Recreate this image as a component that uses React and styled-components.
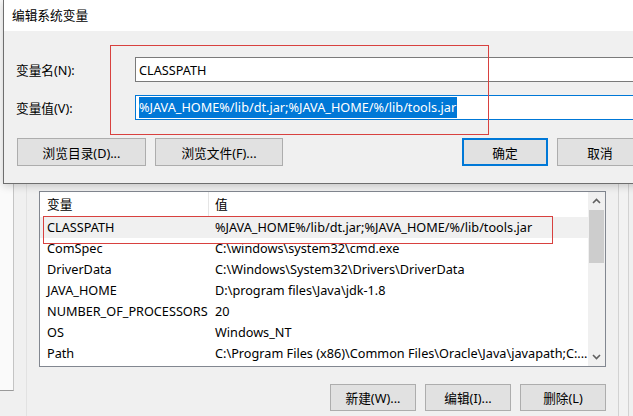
import React from "react";
import styled, { createGlobalStyle } from "styled-components";

const vars = [
  ["CLASSPATH", "%JAVA_HOME%/lib/dt.jar;%JAVA_HOME/%/lib/tools.jar"],
  ["ComSpec", "C:\\windows\\system32\\cmd.exe"],
  ["DriverData", "C:\\Windows\\System32\\Drivers\\DriverData"],
  ["JAVA_HOME", "D:\\program files\\Java\\jdk-1.8"],
  ["NUMBER_OF_PROCESSORS", "20"],
  ["OS", "Windows_NT"],
  ["Path", "C:\\Program Files (x86)\\Common Files\\Oracle\\Java\\javapath;C:..."],
];

function Chevron({ down }) {
  return (
    <svg width="9" height="6" viewBox="0 0 9 6">
      <polyline
        points={down ? "1,1 4.5,4.5 8,1" : "1,5 4.5,1.5 8,5"}
        fill="none"
        stroke="#606060"
        strokeWidth="1.6"
      />
    </svg>
  );
}

function App() {
  return (
    <>
      <GlobalStyle />
      <Desktop>
        <LeftStrip />
        <BackWindow>
          <ListBox>
            <Table>
              <HeaderRow>
                <NameCell $header>变量</NameCell>
                <ValueCell>值</ValueCell>
              </HeaderRow>
              {vars.map(([name, value], i) => (
                <Row key={name} $selected={i === 0}>
                  <NameCell>{name}</NameCell>
                  <ValueCell>{value}</ValueCell>
                </Row>
              ))}
            </Table>
            <Scrollbar>
              <ArrowBox>
                <Chevron />
              </ArrowBox>
              <Thumb />
              <Track />
              <ArrowBox>
                <Chevron down />
              </ArrowBox>
            </Scrollbar>
          </ListBox>
          <BottomButtons>
            <Button $w={86}>新建(W)...</Button>
            <Button $w={86}>编辑(I)...</Button>
            <Button $w={86}>删除(L)</Button>
          </BottomButtons>
        </BackWindow>
        <RightStrip />

        <Dialog>
          <TitleBar>编辑系统变量</TitleBar>
          <DialogBody>
            <Form>
              <Label>变量名(N):</Label>
              <Input>CLASSPATH</Input>
              <Label>变量值(V):</Label>
              <Input $focused>
                <Selected>%JAVA_HOME%/lib/dt.jar;%JAVA_HOME/%/lib/tools.jar</Selected>
              </Input>
            </Form>
            <DialogButtons>
              <Button $w={129} $ml={1}>浏览目录(D)...</Button>
              <Button $w={128}>浏览文件(F)...</Button>
              <Button $w={86} $ml={170} $default>确定</Button>
              <Button $w={86}>取消</Button>
            </DialogButtons>
          </DialogBody>
        </Dialog>

        <RedBox $left={110} $top={45} $w={379} $h={90} />
        <RedBox $left={43} $top={216} $w={510} $h={28} />
      </Desktop>
    </>
  );
}

const GlobalStyle = createGlobalStyle`
  html, body {
    margin: 0;
    padding: 0;
    background: #f0f0f0;
  }
  * {
    box-sizing: border-box;
  }
`;

const Desktop = styled.div`
  position: relative;
  width: 633px;
  height: 416px;
  overflow: hidden;
  display: flex;
  align-items: flex-start;
  background: #f0f0f0;
  font-family: "Noto Sans", "Noto Sans CJK SC", sans-serif;
  font-size: 12.7px;
  color: #000;
`;

const LeftStrip = styled.div`
  width: 14px;
  height: 391px;
  flex: none;
  background: #fafafa;
  border-right: 1px solid #c4c4c4;
  border-bottom: 1px solid #9a9a9a;
`;

const BackWindow = styled.div`
  width: 593px;
  height: 416px;
  flex: none;
  margin-left: 12px;
  padding: 191px 12px 0 12px;
  border-left: 1px solid #e2e2e2;
  border-right: 1px solid #d2d2d2;
  background: #f0f0f0;
`;

const RightStrip = styled.div`
  width: 10px;
  height: 416px;
  flex: none;
  border-right: 1px solid #d2d2d2;
  background: #f2f2f2;
`;

const ListBox = styled.div`
  width: 567px;
  height: 176px;
  display: flex;
  background: #fff;
  border: 1px solid #828790;
`;

const Table = styled.div`
  flex: 1;
  display: flex;
  flex-direction: column;
  overflow: hidden;
`;

const HeaderRow = styled.div`
  display: flex;
  height: 25px;
  line-height: 24px;
  padding-bottom: 1px;
`;

const Row = styled.div`
  display: flex;
  height: 21px;
  line-height: 21px;
  background: ${(p) => (p.$selected ? "#f0f0f0" : "transparent")};
`;

const NameCell = styled.div`
  width: 169px;
  flex: none;
  padding-left: 7px;
  white-space: nowrap;
  border-right: ${(p) => (p.$header ? "1px solid #e5e5e5" : "1px solid transparent")};
`;

const ValueCell = styled.div`
  flex: 1;
  padding-left: 6px;
  white-space: nowrap;
  overflow: hidden;
`;

const Scrollbar = styled.div`
  width: 17px;
  flex: none;
  display: flex;
  flex-direction: column;
  align-items: center;
  background: #f0f0f0;
`;

const ArrowBox = styled.div`
  width: 17px;
  height: 18px;
  display: flex;
  align-items: center;
  justify-content: center;
`;

const Thumb = styled.div`
  width: 15px;
  height: 53px;
  background: #cdcdcd;
`;

const Track = styled.div`
  flex: 1;
`;

const BottomButtons = styled.div`
  display: flex;
  justify-content: flex-end;
  gap: 9px;
  margin-top: 17px;
  width: 567px;
`;

const Button = styled.div`
  width: ${(p) => p.$w}px;
  height: 27px;
  margin-left: ${(p) => p.$ml || 0}px;
  flex: none;
  display: flex;
  align-items: center;
  justify-content: center;
  background: #e1e1e1;
  border: ${(p) => (p.$default ? "2px solid #0078d7" : "1px solid #adadad")};
  white-space: nowrap;
`;

const Dialog = styled.div`
  position: absolute;
  left: 3px;
  top: 0;
  width: 720px;
  height: 184px;
  background: #f0f0f0;
  border-left: 1px solid #6e6e6e;
  border-bottom: 1px solid #6e6e6e;
  box-shadow: 0 2px 8px rgba(0, 0, 0, 0.18);
`;

const TitleBar = styled.div`
  height: 31px;
  padding-left: 8px;
  line-height: 30px;
  background: #fff;
`;

const DialogBody = styled.div`
  padding: 26px 0 0 12px;
`;

const Form = styled.div`
  display: grid;
  grid-template-columns: 119px 600px;
  row-gap: 13px;
  align-items: center;
`;

const Label = styled.div`
  white-space: nowrap;
`;

const Input = styled.div`
  height: 25px;
  display: flex;
  align-items: center;
  padding-left: 3px;
  background: #fff;
  border: 1px solid ${(p) => (p.$focused ? "#0078d7" : "#7a7a7a")};
  white-space: nowrap;
`;

const Selected = styled.span`
  display: inline-block;
  height: 21px;
  line-height: 21px;
  padding-right: 1px;
  background: #0078d7;
  color: #fff;
`;

const DialogButtons = styled.div`
  display: flex;
  gap: 9px;
  margin-top: 18px;
  ${Button} {
    height: 28px;
  }
`;

const RedBox = styled.div`
  position: absolute;
  left: ${(p) => p.$left}px;
  top: ${(p) => p.$top}px;
  width: ${(p) => p.$w}px;
  height: ${(p) => p.$h}px;
  border: 1px solid #d8413f;
  pointer-events: none;
`;

export default App;
